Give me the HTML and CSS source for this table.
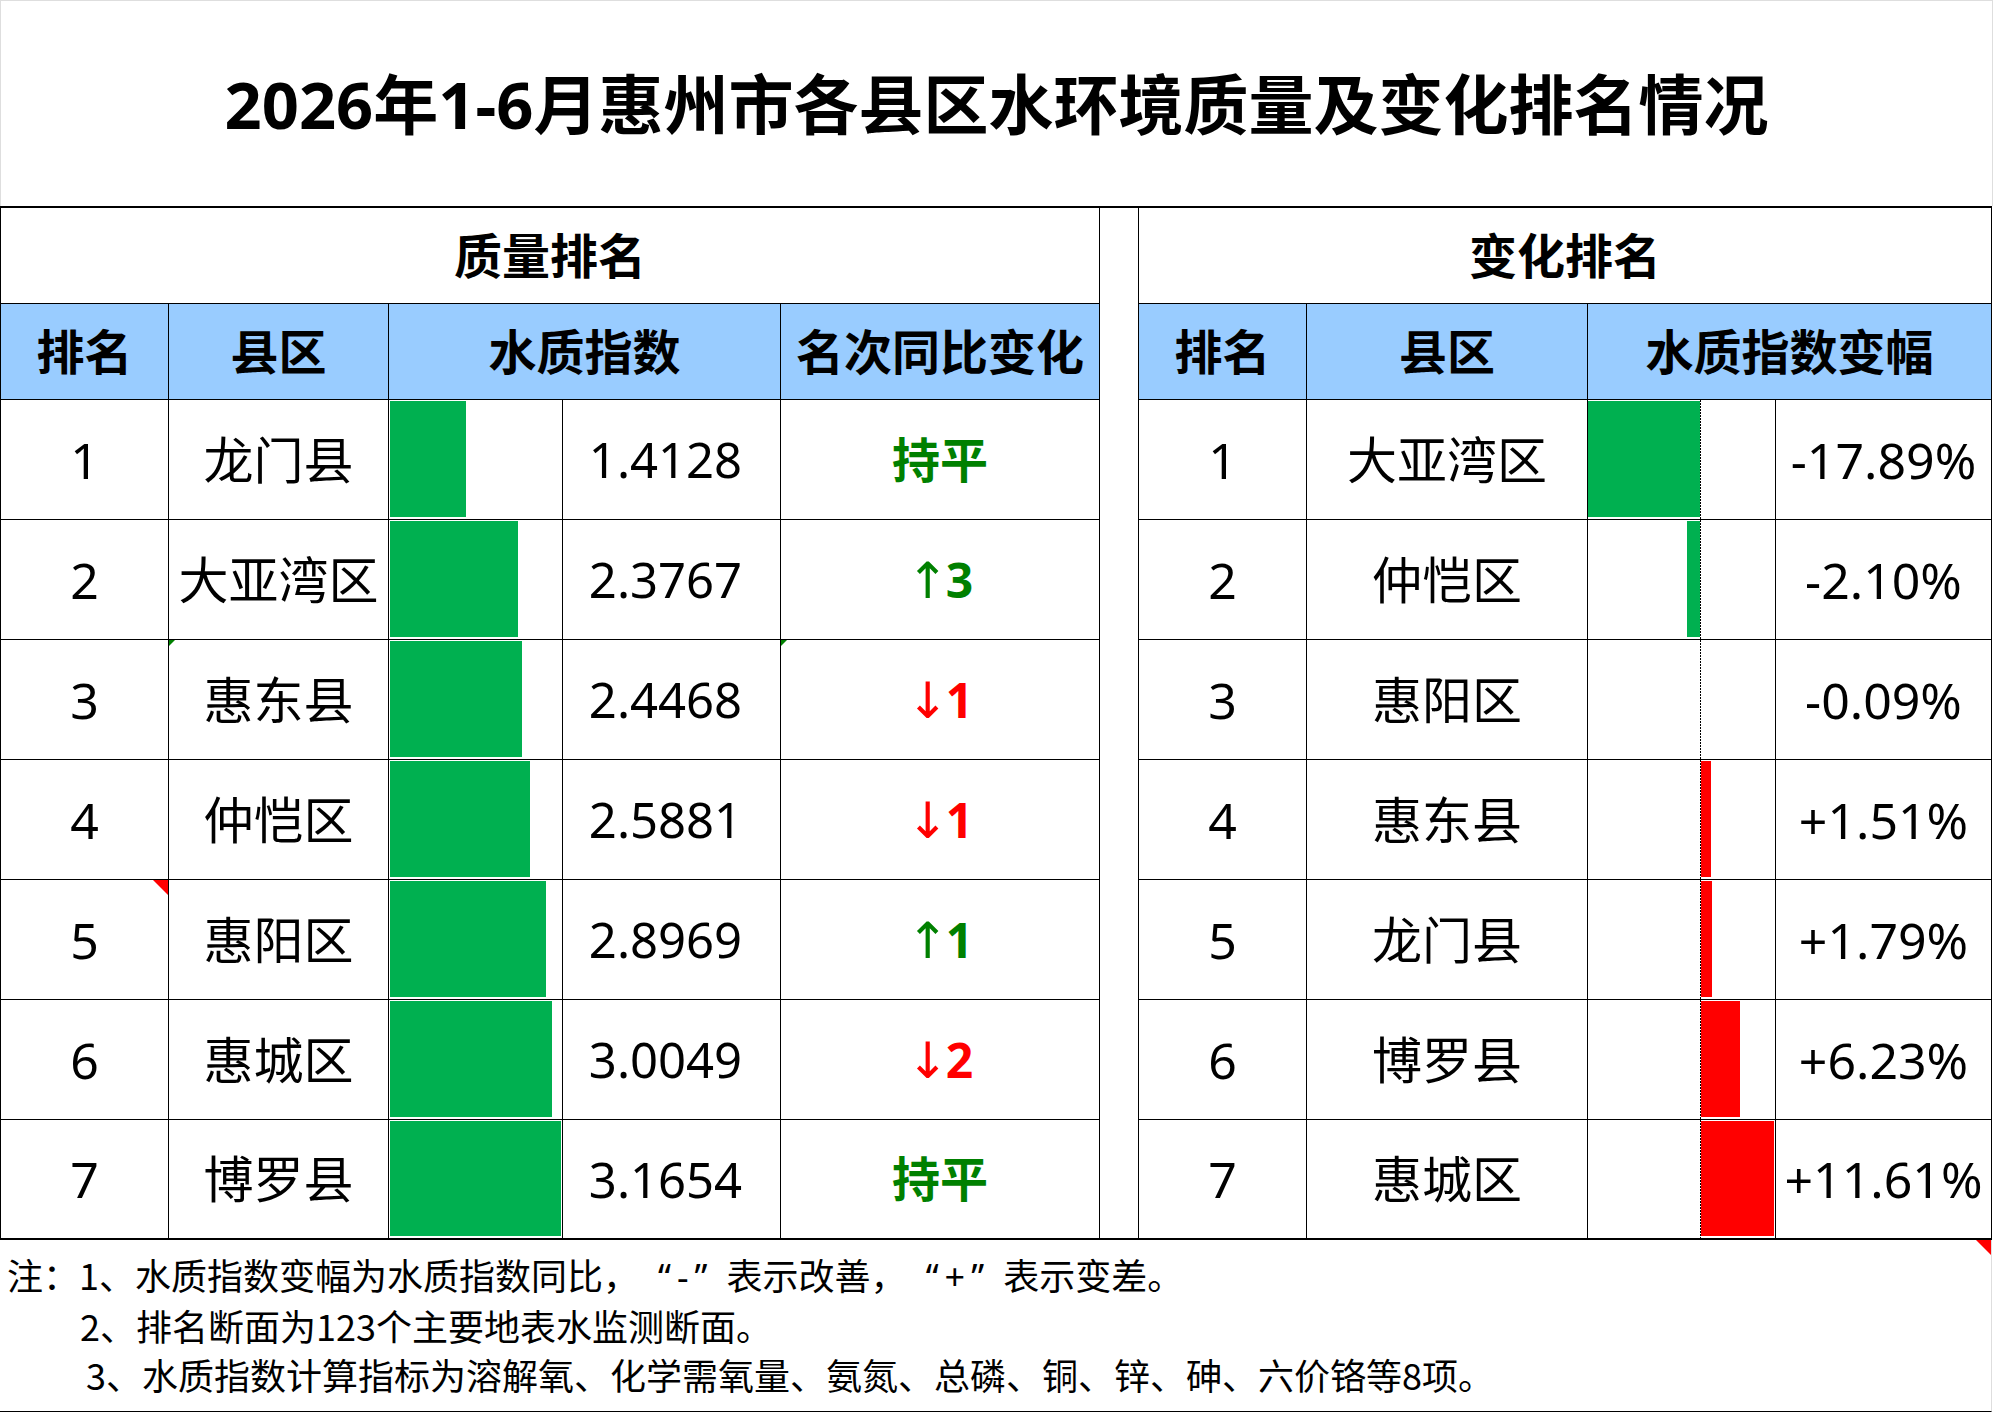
FILE: index.html
```html
<!DOCTYPE html>
<html lang="zh-CN">
<head>
<meta charset="utf-8">
<title>2026年1-6月惠州市各县区水环境质量及变化排名情况</title>
<link rel="stylesheet" href="styles.css">
</head>
<body>
<div class="page">
  <div class="title-area">
    <h1 class="title">2026年1-6月惠州市各县区水环境质量及变化排名情况</h1>
  </div>
  <div class="tables">
    <div class="grid qtable">
      <div class="cell group span5">质量排名</div>
      <div class="cell head">排名</div>
      <div class="cell head">县区</div>
      <div class="cell head span2">水质指数</div>
      <div class="cell head">名次同比变化</div>

      <div class="cell">1</div>
      <div class="cell">龙门县</div>
      <div class="cell barcell"><div class="bar green" style="width:76px"></div></div>
      <div class="cell val">1.4128</div>
      <div class="cell flat">持平</div>

      <div class="cell">2</div>
      <div class="cell">大亚湾区</div>
      <div class="cell barcell"><div class="bar green" style="width:128px"></div></div>
      <div class="cell val">2.3767</div>
      <div class="cell up"><span class="arrow">↑</span>3</div>

      <div class="cell">3</div>
      <div class="cell mark-green">惠东县</div>
      <div class="cell barcell"><div class="bar green" style="width:132px"></div></div>
      <div class="cell val">2.4468</div>
      <div class="cell down mark-green"><span class="arrow">↓</span>1</div>

      <div class="cell">4</div>
      <div class="cell">仲恺区</div>
      <div class="cell barcell"><div class="bar green" style="width:140px"></div></div>
      <div class="cell val">2.5881</div>
      <div class="cell down"><span class="arrow">↓</span>1</div>

      <div class="cell mark-red">5</div>
      <div class="cell">惠阳区</div>
      <div class="cell barcell"><div class="bar green" style="width:156px"></div></div>
      <div class="cell val">2.8969</div>
      <div class="cell up"><span class="arrow">↑</span>1</div>

      <div class="cell">6</div>
      <div class="cell">惠城区</div>
      <div class="cell barcell"><div class="bar green" style="width:162px"></div></div>
      <div class="cell val">3.0049</div>
      <div class="cell down"><span class="arrow">↓</span>2</div>

      <div class="cell">7</div>
      <div class="cell">博罗县</div>
      <div class="cell barcell"><div class="bar green" style="width:171px"></div></div>
      <div class="cell val">3.1654</div>
      <div class="cell flat">持平</div>
    </div>

    <div class="spacer"></div>

    <div class="grid ctable">
      <div class="cell group span4">变化排名</div>
      <div class="cell head">排名</div>
      <div class="cell head">县区</div>
      <div class="cell head span2">水质指数变幅</div>

      <div class="cell">1</div>
      <div class="cell">大亚湾区</div>
      <div class="cell axiscell"><div class="neg"><div class="bar green" style="width:112px"></div></div><div class="axis"></div><div class="pos"></div></div>
      <div class="cell">-17.89%</div>

      <div class="cell">2</div>
      <div class="cell">仲恺区</div>
      <div class="cell axiscell"><div class="neg"><div class="bar green" style="width:13px"></div></div><div class="axis"></div><div class="pos"></div></div>
      <div class="cell">-2.10%</div>

      <div class="cell">3</div>
      <div class="cell">惠阳区</div>
      <div class="cell axiscell"><div class="neg"></div><div class="axis"></div><div class="pos"></div></div>
      <div class="cell">-0.09%</div>

      <div class="cell">4</div>
      <div class="cell">惠东县</div>
      <div class="cell axiscell"><div class="neg"></div><div class="axis"></div><div class="pos"><div class="bar red" style="width:9.5px"></div></div></div>
      <div class="cell">+1.51%</div>

      <div class="cell">5</div>
      <div class="cell">龙门县</div>
      <div class="cell axiscell"><div class="neg"></div><div class="axis"></div><div class="pos"><div class="bar red" style="width:11px"></div></div></div>
      <div class="cell">+1.79%</div>

      <div class="cell">6</div>
      <div class="cell">博罗县</div>
      <div class="cell axiscell"><div class="neg"></div><div class="axis"></div><div class="pos"><div class="bar red" style="width:39px"></div></div></div>
      <div class="cell">+6.23%</div>

      <div class="cell">7</div>
      <div class="cell">惠城区</div>
      <div class="cell axiscell"><div class="neg"></div><div class="axis"></div><div class="pos"><div class="bar red" style="width:73px"></div></div></div>
      <div class="cell">+11.61%</div>
    </div>
  </div>
  <div class="notes">
    <div class="note-line first">注：1、水质指数变幅为水质指数同比，<span class="q l">“</span><span class="sym">-</span><span class="q r">”</span>表示改善，<span class="q l">“</span><span class="sym">+</span><span class="q r">”</span>表示变差。</div>
    <div class="note-line second">2、排名断面为123个主要地表水监测断面。</div>
    <div class="note-line third">3、水质指数计算指标为溶解氧、化学需氧量、氨氮、总磷、铜、锌、砷、六价铬等8项。</div>
  </div>
</div>
</body>
</html>
```

FILE: styles.css
```css
html, body {
  margin: 0;
  padding: 0;
  background: #ffffff;
}

body {
  font-family: "Noto Sans", "Noto Sans CJK SC", sans-serif;
  color: #000;
}

.page {
  width: 1993px;
  height: 1413px;
  box-sizing: border-box;
}

.title-area {
  height: 206px;
  box-sizing: border-box;
  border-top: 1px solid #dedede;
  border-left: 1px solid #dedede;
  border-right: 1px solid #dedede;
  display: flex;
  align-items: center;
  justify-content: center;
}

.title {
  margin: 0;
  font-size: 65px;
  font-weight: 700;
  line-height: 1;
  letter-spacing: 0;
  padding-top: 2px;
}

.tables {
  display: flex;
  width: 1992px;
  border-top: 2px solid #000;
  border-bottom: 2px solid #000;
}

.grid {
  display: grid;
  gap: 1px;
  padding: 0 1px;
  background: #000;
  grid-template-rows: 95px 95px repeat(6, 119px) 118px;
}

.qtable {
  grid-template-columns: 167px 219px 173px 217px 318px;
}

.ctable {
  grid-template-columns: 167px 280px 187px 215px;
}

.spacer {
  width: 38px;
  background: #fff;
}

.cell {
  position: relative;
  background: #fff;
  display: flex;
  align-items: center;
  justify-content: center;
  font-size: 50px;
  line-height: 1;
  white-space: nowrap;
}

.val {
  font-size: 49px;
  padding-right: 12px;
}

.span5 { grid-column: span 5; }
.span4 { grid-column: span 4; }
.span2 { grid-column: span 2; }

.group {
  font-size: 48px;
  font-weight: 700;
}

.head {
  background: #99ccff;
  font-size: 48px;
  font-weight: 700;
}

.flat {
  color: #008000;
  font-size: 48px;
  font-weight: 700;
}

.up {
  color: #008000;
  font-size: 48px;
  font-weight: 700;
}

.down {
  color: #ff0000;
  font-size: 48px;
  font-weight: 700;
}

.arrow {
  font-family: "DejaVu Sans", sans-serif;
  font-weight: 400;
  font-size: 50px;
  margin-right: -3px;
  position: relative;
  top: 1px;
}

.barcell {
  justify-content: flex-start;
  align-items: stretch;
  padding: 1px 0 2px 1px;
}

.bar {
  height: 100%;
}

.bar.green { background: #00b050; }
.bar.red { background: #ff0000; }

.axiscell {
  justify-content: flex-start;
  align-items: stretch;
}

.neg {
  width: 112px;
  display: flex;
  justify-content: flex-end;
  padding: 1px 0 2px;
  box-sizing: border-box;
}

.axis {
  width: 1px;
  background: repeating-linear-gradient(to bottom, #000 0 2px, transparent 2px 3px);
}

.pos {
  flex: 1;
  display: flex;
  justify-content: flex-start;
  padding: 1px 0 2px;
  box-sizing: border-box;
}

.mark-red::after {
  content: "";
  position: absolute;
  top: 0;
  right: 0;
  width: 0;
  height: 0;
  border-top: 15px solid #ff0000;
  border-left: 15px solid transparent;
}

.mark-green::before {
  content: "";
  position: absolute;
  top: 0;
  left: 0;
  width: 0;
  height: 0;
  border-top: 6px solid #008000;
  border-right: 6px solid transparent;
}

.notes {
  position: relative;
  width: 1992px;
  height: 172px;
  box-sizing: border-box;
  border-bottom: 1px solid #000;
  border-right: 1px solid #dedede;
  padding-top: 10px;
  font-family: "Noto Sans CJK SC", sans-serif;
  font-size: 36px;
  line-height: 49px;
}

.notes::after {
  content: "";
  position: absolute;
  top: 0;
  right: 0;
  width: 0;
  height: 0;
  border-top: 15px solid #ff0000;
  border-left: 15px solid transparent;
}

.note-line {
  white-space: nowrap;
}

.note-line.first { padding-left: 7px; }
.note-line.second { padding-left: 80px; }
.note-line.third { padding-left: 86px; }

.q {
  display: inline-block;
  line-height: 1;
  font-family: "Noto Sans", sans-serif;
}

.q.l { text-align: right; padding-right: 6px; width: 32px; }
.q.r { text-align: left; padding-left: 6px; width: 32px; }

.sym {
  font-family: "Noto Sans", sans-serif;
}
```
